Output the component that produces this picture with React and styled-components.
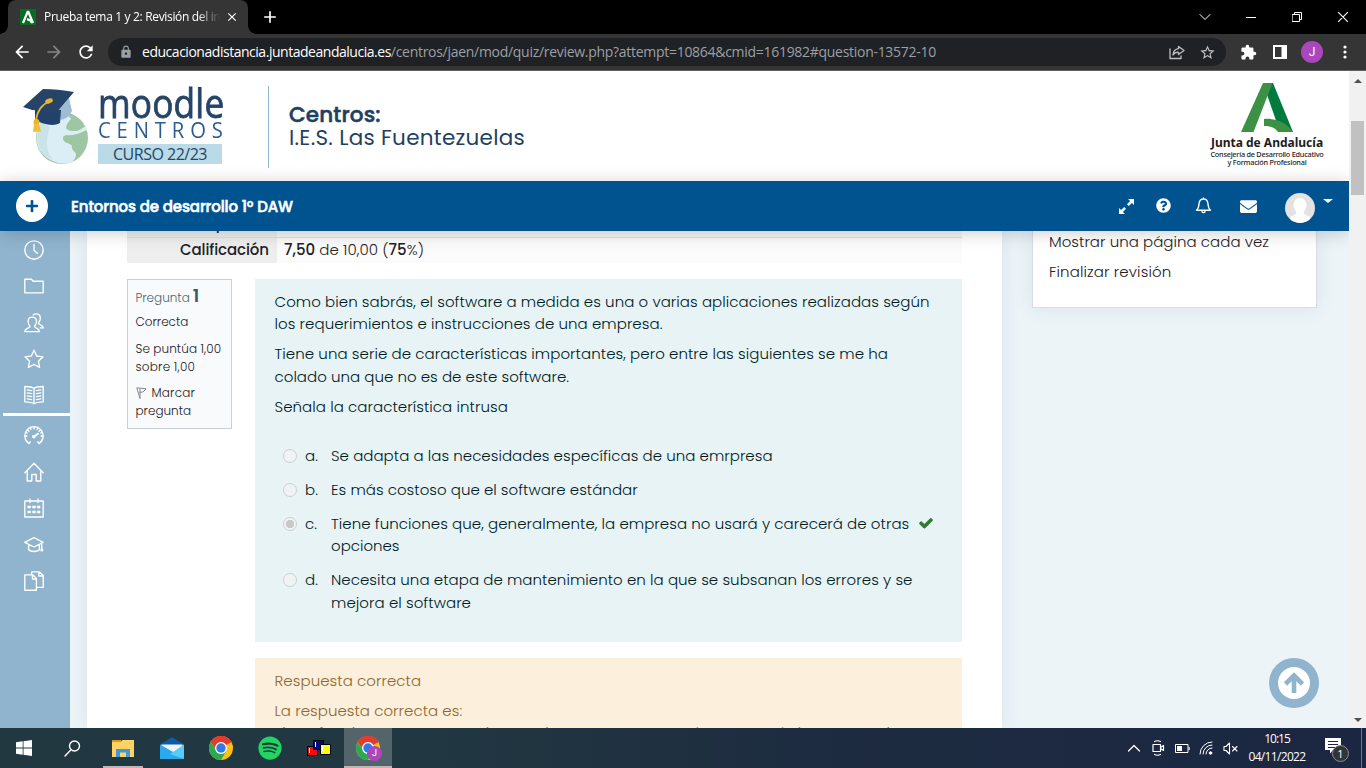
import React, { useLayoutEffect, useRef, useState } from "react";
import styled, { createGlobalStyle, css } from "styled-components";
import { MdArrowBack, MdArrowForward, MdRefresh, MdLock, MdExtension, MdStarBorder, MdClose, MdAdd } from "react-icons/md";
import { FaQuestionCircle, FaEnvelope, FaPlus, FaSpotify } from "react-icons/fa";

const Global = createGlobalStyle`
  * { box-sizing: border-box; }
  body { margin: 0; overflow: hidden; background: #fff; }
  svg { display: block; flex: none; }
  p { margin: 0; }
`;
const ui = '"Open Sans", "Noto Sans", sans-serif';
const geo = 'Poppins, Inter, "Open Sans", sans-serif';

const Screen = styled.div`
  width: 1366px; height: 768px; overflow: hidden;
  display: flex; flex-direction: column; font-family: ${geo};
`;

/* Text that spreads its letters over a given measure. */
const FitSpan = styled.span`
  display: inline-block; white-space: nowrap;
  font-weight: ${(p) => p.$weight || "inherit"};
`;
const Heavy = styled.span`-webkit-text-stroke: 0.55px currentColor; font-weight: 500;`;
function Fit({ w, weight, children }) {
  const ref = useRef(null);
  const [gap, setGap] = useState(0);
  useLayoutEffect(() => {
    const el = ref.current;
    el.style.letterSpacing = "0px";
    const next = (w - el.offsetWidth) / Math.max(1, el.textContent.length - 1);
    el.style.letterSpacing = next + "px";
    setGap(next);
  }, [w]);
  return <FitSpan ref={ref} $weight={weight} style={{ letterSpacing: gap + "px" }}>{children}</FitSpan>;
}

/* ---------- browser ---------- */
const TabStrip = styled.div`
  height: 34px; flex: none; background: #000; display: flex; align-items: center; padding-left: 8px; color: #fff;
`;
const Tab = styled.div`
  position: relative; width: 240px; height: 34px; background: #353535; border-radius: 8px 8px 0 0;
  display: flex; align-items: center; padding: 0 8px 0 12px; font: 12px ${ui};
  &::before, &::after {
    content: ""; position: absolute; bottom: 0; width: 8px; height: 8px;
  }
  &::before { left: -8px; background: radial-gradient(circle at 0 0, #000 7.5px, #353535 8px); }
  &::after { right: -8px; background: radial-gradient(circle at 100% 0, #000 7.5px, #353535 8px); }
`;
const TabTitle = styled.div`
  width: 176px; margin: 0 5px 0 8px; overflow: hidden; white-space: nowrap; line-height: 18px;
  mask-image: linear-gradient(90deg, #000 154px, transparent 176px);
`;
const NewTab = styled.div`margin-left: 12px;`;
const WindowButtons = styled.div`
  margin-left: auto; display: flex; height: 28px; align-items: center;
`;
const WinButton = styled.div`width: 46px; display: flex; justify-content: center;`;
const Toolbar = styled.div`
  height: 37px; flex: none; background: #353535; border-bottom: 1px solid #606060; color: #fff;
  display: flex; align-items: center; padding-left: 12px;
`;
const NavIcons = styled.div`display: flex; gap: 12px; width: 96px; svg:nth-child(2) { color: #858585; }`;
const UrlBar = styled.div`
  width: 1118px; height: 28px; border-radius: 14px; background: #202124; display: flex; align-items: center;
  padding: 0 10px 0 11px; font: 14px ${ui}; color: #fff; white-space: nowrap;
`;
const UrlText = styled.div`margin-left: 9px; line-height: 20px; span + span { color: #9aa0a6; }`;
const UrlActions = styled.div`margin-left: auto; display: flex; gap: 14px; align-items: center; color: #bdc1c6;`;
const Extensions = styled.div`margin-left: 14px; display: flex; align-items: center; gap: 16px;`;
const Profile = styled.div`
  width: 22px; height: 22px; border-radius: 50%; background: #ab47bc; margin: 0 -2px;
  font: 12px/22px Roboto, sans-serif; text-align: center;
`;

/* ---------- page ---------- */
const Viewport = styled.div`height: 657px; flex: none; display: flex;`;
const Page = styled.div`position: relative; width: 1349px; display: flex; flex-direction: column; overflow: hidden;`;
const SiteHeader = styled.div`height: 110px; flex: none; background: #fff; display: flex; align-items: flex-start;`;
const MoodleLogo = styled.div`
  margin-left: 22px; margin-top: 15px; width: 247px; height: 82px; border-right: 1px solid #90b4ce; display: flex;
  font-family: ${ui};
`;
const LogoWords = styled.div`margin-left: 9px; width: 126px; display: flex; flex-direction: column;`;
const WordMoodle = styled.div`
  height: 35px; width: 148px; font-size: 41px; line-height: 33px; color: #264467; -webkit-text-stroke: 0.8px #264467;
  transform: scaleX(0.86); transform-origin: 0 0;
`;
const WordCentros = styled.div`
  height: 23px; width: 140px; font-size: 22.5px; line-height: 18px; color: #2d5c93; transform: scaleX(0.9); transform-origin: 0 0;
`;
const WordYear = styled.div`
  width: 124px; height: 20px; background: #b9dae6; color: #264467; font-size: 16px; line-height: 20px; text-align: center;
`;
const Centre = styled.div`margin: 33px 0 0 20px; font-size: 21.5px; line-height: 22.5px; color: #1f3f63;`;
const JuntaLogo = styled.div`
  margin: 12px 25px 0 auto; width: 114px; display: flex; flex-direction: column; align-items: center;
  font-family: "Noto Sans", sans-serif; color: #1d1d1b;
`;
const JuntaName = styled.div`margin-top: 4px; font-size: 12px; line-height: 14px; font-weight: 700;`;
const JuntaDept = styled.div`font-size: 7.3px; line-height: 8px; font-weight: 500;`;

const Navbar = styled.div`
  position: relative; z-index: 2; height: 50px; flex: none; background: #00538f; color: #fff;
  display: flex; align-items: center; padding: 0 16px; box-shadow: 0 2px 18px rgba(0, 0, 0, 0.2);
  font-size: 15px;
`;
const PlusButton = styled.div`
  width: 32px; height: 32px; border-radius: 50%; background: #fff; color: #00538f; margin-right: 23px;
  display: flex; align-items: center; justify-content: center;
`;
const NavTools = styled.div`margin-left: auto; display: flex; align-items: center;`;
const NavTool = styled.div`width: ${(p) => p.$w}px; display: flex; justify-content: center; margin-top: ${(p) => p.$lift || 0}px;`;
const Avatar = styled.div`
  width: 30px; height: 30px; margin: 4px 8px 0 13px; border-radius: 50%; overflow: hidden; background: #e3e3e3;
`;
const Caret = styled.div`border: 5px solid transparent; border-top: 4px solid #fff; border-bottom: 0; margin-top: -10px;`;

const Body = styled.div`flex: 1; display: flex; background: #ecf4f8; min-height: 0;`;
const Sidebar = styled.div`
  width: 70px; background: #90b4ce; color: #fff; display: flex; flex-direction: column; align-items: flex-end; padding-top: 0.8px;
`;
const SideItem = styled.div`
  width: 70px; height: 36.3px; display: flex; align-items: center; justify-content: center; padding-right: 1.5px;
`;
const SideRule = styled.div`width: 67px; height: 3px; background: #fff; margin: 0 0 1.2px;`;
const Card = styled.div`background: #fff; box-shadow: 0 0 18px rgba(40, 70, 110, 0.1);`;
const MainCard = styled(Card)`width: 915px; margin-left: 17px; padding: 0 40px; overflow: hidden;`;
const BlockCard = styled(Card)`
  width: 285px; height: 77px; margin-left: 30px; border: 1px solid #d8dfe3; border-top: 0; padding: 0 16px;
  font-size: 15px; line-height: 30px; font-weight: 300; color: #1d2125;
  p:first-child { margin-top: -4px; }
`;
const Summary = styled.div`
  height: 32px; display: flex; flex-direction: column; justify-content: flex-end; overflow: hidden; font-size: 15px;
`;
const SummaryRow = styled.div`display: flex; flex: none; border-bottom: ${(p) => (p.$line ? "1px solid #dee2e6" : "0")};`;
const SummaryHead = styled.div`
  width: 150px; background: #eeeeee; padding: 1px 8px 1.5px; text-align: right; line-height: 22.5px; font-weight: 500; color: #1d2125;
`;
const SummaryCell = styled.div`flex: 1; background: ${(p) => (p.$alt ? "#f8f8f8" : "#fbfbfb")}; padding: 1px 7px 1.5px; line-height: 22.5px; font-weight: 300; color: #1d2125;`;
const Question = styled.div`display: flex; margin-top: 16px; gap: 23px; align-items: flex-start;`;
const Info = styled.div`
  width: 105px; height: 150px; flex: none; border: 1px solid #cad0d7; background: #f8fafc; padding: 7px 0 0 7.5px;
  font-size: 12px; line-height: 18px; font-weight: 300; color: #1d2125; white-space: nowrap;
`;
const InfoPart = styled.div`
  margin-bottom: ${(p) => p.$after}px; height: ${(p) => p.$h || 18}px; display: flex; align-items: ${(p) => p.$align || "center"};
  color: ${(p) => p.$color || "inherit"};
`;
const QNumber = styled.span`font-size: 18px; font-weight: 600; line-height: 18px; margin-left: 3px; color: #3f5a68;`;
const FlagSlot = styled.span`width: 16px;`;
const Content = styled.div`width: 707px;`;
const paper = css`font-size: 15px; line-height: 22.5px; font-weight: 300; white-space: nowrap;`;
const Formulation = styled.div`
  ${paper} height: 363px; background: #e7f3f5; color: #001a1e; padding: 11.5px 19.5px 0;
`;
const Para = styled.p`margin-bottom: 7.5px;`;
const Answers = styled.div`margin-top: 26.5px;`;
const Answer = styled.div`display: flex; padding: 0 0 11.6px 8px;`;
const Radio = styled.span`
  width: 14px; height: 14px; margin: 4px 8.5px 0 0; flex: none; border: 1px solid #cbd1d3; border-radius: 50%;
  background: ${(p) => (p.$on ? "radial-gradient(circle, #c6c9ca 3.8px, #f0f4f5 4.5px)" : "#eff3f4")};
`;
const Letter = styled.span`width: 26px; flex: none;`;
const Tick = styled.span`margin: 2px 0 0 9px; color: #357a32; height: 14px;`;
const Outcome = styled.div`
  ${paper} margin-top: 16px; height: 120px; padding: 11.5px 19.5px; background: #fcefdc; color: #8e662e;
`;
const TopButton = styled.div`
  position: absolute; right: 30px; bottom: 20px; width: 50px; height: 50px; border-radius: 50%;
  border: 9px solid #90b4ce; background: #fff; color: #90b4ce; display: flex; align-items: center; justify-content: center;
`;
const Scrollbar = styled.div`
  width: 17px; background: #f1f1f1; display: flex; flex-direction: column; align-items: center; padding: 8px 0 6px;
`;
const ScrollArrow = styled.div`
  border: 4px solid transparent; ${(p) => (p.$up ? "border-bottom: 4px solid #505050; border-top: 0;" : "border-top: 4px solid #505050; border-bottom: 0; margin-top: auto;")}
`;
const Thumb = styled.div`width: 13px; height: 74px; margin-top: 38px; background: #c1c1c1;`;

/* ---------- taskbar ---------- */
const Taskbar = styled.div`
  height: 40px; flex: none; display: flex; background: linear-gradient(90deg, #213841 0%, #213741 32%, #1d2b40 62%, #1b2742 100%);
  color: #fff; font-family: ${ui};
`;
const Task = styled.div`
  width: 49px; height: 40px; display: flex; align-items: center; justify-content: center; position: relative;
  padding-right: ${(p) => p.$nudge || 0}px;
  background: ${(p) => (p.$active ? "linear-gradient(90deg, transparent 1px, #53646b 1px)" : "none")};
  ${(p) => p.$open && css`&::after { content: ""; position: absolute; bottom: 0; left: ${p.$active ? 1 : 5}px; right: ${p.$active ? 0 : 4}px; height: 2px; background: #c0b4b4; }`}
`;
const TaskBadge = styled.span`
  position: absolute; left: 24px; top: 18px; width: 15px; height: 15px; border-radius: 50%; background: #ab47bc;
  font: 9px/15px Roboto, sans-serif; text-align: center;
`;
const Tray = styled.div`margin-left: auto; display: flex; align-items: center;`;
const TrayIcon = styled.div`width: 23.9px; display: flex; justify-content: center;`;
const Clock = styled.div`width: 60px; margin: 0 18px 0 5px; text-align: center; font-size: 12px; line-height: 18px;`;
const Notice = styled.div`position: relative; width: 18px; height: 18px; margin: 0 18px 2px 0;`;
const NoticeCount = styled.span`
  position: absolute; left: 7px; top: 7px; width: 17px; height: 17px; border: 1px solid #8c8f94; border-radius: 50%;
  background: #303439; font-size: 11px; line-height: 15px; text-align: center;
`;
const ShowDesktop = styled.div`width: 5px; height: 40px; border-left: 1px solid #6c7588;`;

const S = ({ size = 20, sw = 1.35, children, box = 20 }) => (
  <svg width={size} height={size} viewBox={`0 0 ${box} ${box}`} fill="none" stroke="currentColor" strokeWidth={sw} strokeLinejoin="round" strokeLinecap="round">{children}</svg>
);

const sideIcons = [
  <S key="a"><circle cx="10" cy="10" r="9.2" /><path d="M10 4.2V10.2l3.4 3" /></S>,
  <S key="b"><path d="M.8 3.2h6.6l1.7 2h10.1v11.6H.8z" /></S>,
  <S key="c"><path d="M8.3 4.1c2.7 0 4.2 1.8 4.2 4.3 0 2-.8 3.3-1.8 4.4-.5 1.3.4 1.8 1.8 2.4 2 .8 2.8 1.7 3 3.4H.8c.2-1.8 1-2.7 3.2-3.5 1.4-.5 2.3-1 1.8-2.3-1-1.1-1.700-2.400-1.700-4.400 0-2.500 1.500-4.300 4.200-4.300z" /><path d="M9.200 2c.9-.8 1.900-1.100 3-1.100 2.600 0 4.100 1.800 4.100 4.300 0 1.900-.7 3.200-1.700 4.300-.5 1.300.5 1.800 1.800 2.300 1.900.7 2.700 1.500 2.900 3.100h-3.100" /></S>,
  <S key="d"><path d="M10 1.200l2.700 5.800 6.300.8-4.600 4.400 1.200 6.300-5.600-3.100-5.600 3.100 1.200-6.300L1 7.800 7.300 7z" /></S>,
  <S key="e"><path d="M10 3.400C8 1.800 4.500 1.600.8 1.500v15.300c3.700.1 7.200.5 9.200 2 2-1.500 5.500-1.900 9.200-2V1.500c-3.700.1-7.200.3-9.200 1.900zM10 3.400v15M3.300 4.800l4.300.8M3.300 7.800l4.300.8M3.300 10.800l4.300.8M3.300 13.800l4.300.8M16.700 4.800l-4.300.8M16.700 7.800l-4.300.8M16.700 10.800l-4.300.8M16.700 13.800l-4.300.8" /></S>,
  <S key="f"><path d="M5 17.600A9.200 9.200 0 1 1 15 17.600l-1.200-1.800M5 17.600l1.200-1.800M10 1v2M1 10h2M19 10h-2M3.600 3.800L5 5.200M16.400 3.800L15 5.200M6.300 1.800l.7 1.600M13.700 1.800l-.7 1.600M1.700 6.400l1.600.7M18.300 6.400l-1.600.7" /><path d="M10 10.600l4-2.800" strokeWidth="2" /><circle cx="9.800" cy="10.700" r="1.100" fill="currentColor" /></S>,
  <S key="g"><path d="M.9 10.800L10 1.300l9.100 9.500M3.200 9v10h4.600v-6.500h4.400V19h4.600V9" /></S>,
  <S key="h"><path d="M.8 3h18.400v16H.8zM6 1v3.500M14 1v3.500" /><path d="M4 8h2.500v2H4zM8.800 8h2.500v2H8.800zM13.500 8H16v2h-2.500zM4 13h2.500v2H4zM8.800 13h2.500v2H8.800zM13.500 13H16v2h-2.500z" fill="currentColor" strokeWidth=".6" /></S>,
  <S key="i"><path d="M10 2.700L.8 7.400 10 12l9.200-4.600zM4.600 9.600v5.100c1.500 2.400 9.300 2.400 10.800 0V9.600M17.800 8.200v6" /><circle cx="17.800" cy="15" r=".9" /></S>,
  <S key="j"><path d="M.8 3.800h8l3.600 3.800v11.600H.8zM8.400 4v4h4M7.600 3.600V.9h7.800l3.800 3.700v11.800h-6.600M14.800 1v4h4" /></S>,
];

const MoodleMark = () => (
  <svg width="67" height="80" viewBox="22 86 67 80">
    <circle cx="62" cy="138" r="26" fill="#9fc6a3" />
    <path d="M43 120c-7 8-8 20-4 29 4 7 12 12 19 14 5 1 9 1 13 0 3-3 5-5 5-9-1-3-5-4-4-8-2-3-5-2-8-5-2-3-1-5 2-6 6 1 10-1 14-2l7-3-1-4c-4 2-7 5-10 5-5 0-8 0-10-3 0-3 2-6 5-9-1-4-8-4-13 0z" fill="#dceef5" />
    <path d="M41 122c-6 12-4 25 2 32l11 7c-8-8-9-21-4-34z" fill="#c9e3e7" />
    <path d="M57 112l12-14 3 13c-3 6-7 8-11 9z" fill="#9ebbd5" />
    <path d="M35 107l26 3-1 13c-7 4-17 1-25-3z" fill="#21426b" />
    <path d="M23 107l20-18c10 0 20 1 31 3l-17 20c-11 1-23-1-34-5z" fill="#264467" />
    <path d="M50 101c-7 3-13 8-14 20" fill="none" stroke="#e9b72e" strokeWidth="1.800" />
    <ellipse cx="49" cy="101" rx="4" ry="2.300" fill="#e9b72e" transform="rotate(-20 49 101)" />
    <circle cx="36.500" cy="122" r="3" fill="#e9b72e" /><path d="M34 124h5l2 7.500-8 .5z" fill="#f2c037" />
  </svg>
);
const JuntaMark = () => (
  <svg width="53" height="49" viewBox="0 0 53 49">
    <path d="M22 0h10l20 49H39z" fill="#007a3d" />
    <path d="M22 0h9.500L12.500 49H0z" fill="#3c9144" />
    <path d="M23 36c11-1 23 3 29 13H37c-4-5-8-6-14-6z" fill="#3c9144" />
  </svg>
);
const Chrome = () => (
  <svg width="24" height="24" viewBox="0 0 24 24">
    <circle cx="12" cy="12" r="12" fill="#fbc116" />
    <path d="M12 12L1.600 6A12 12 0 0 1 22.400 6z" fill="#e33b2e" /><path d="M12 6.500h10.700A12 12 0 0 0 1.600 6L7.500 14z" fill="#e33b2e" />
    <path d="M1.600 6A12 12 0 0 0 12 24l5-8.500-5-1-4.800-.5z" fill="#2da94f" />
    <circle cx="12" cy="12" r="6" fill="#fff" /><circle cx="12" cy="12" r="4.700" fill="#2f79e8" />
  </svg>
);

export default function App() {
  return (
    <Screen>
      <Global />
      <TabStrip>
        <Tab>
          <svg width="16" height="16" viewBox="0 0 16 16"><path d="M0 0h16v16H0z" fill="#0a6b24" /><path d="M8 2L3 14M8 2l5 12M7 10.300q3.500 0 5 3.700" fill="none" stroke="#fff" strokeWidth="2.200" /></svg>
          <TabTitle><Fit w={177}>Prueba tema 1 y 2: Revisión del in</Fit></TabTitle>
          <MdClose size={14} />
        </Tab>
        <NewTab><MdAdd size={20} /></NewTab>
        <WindowButtons>
          <WinButton><S size={12} box={12} sw={1}><path d="M1 3.500l5 5 5-5" /></S></WinButton>
          <WinButton><S size={10} box={10} sw={1}><path d="M0 5.500h10" /></S></WinButton>
          <WinButton><S size={10} box={10} sw={1}><path d="M.5 2.500h7v7h-7zM2.500 2.500v-2h7v7h-2" /></S></WinButton>
          <WinButton><S size={10} box={10} sw={1.1}><path d="M0 0l10 10M10 0L0 10" /></S></WinButton>
        </WindowButtons>
      </TabStrip>
      <Toolbar>
        <NavIcons><MdArrowBack size={20} /><MdArrowForward size={20} /><MdRefresh size={20} /></NavIcons>
        <UrlBar>
          <MdLock size={14} color="#9aa0a6" />
          <UrlText>
            <Fit w={249}>educacionadistancia.juntadeandalucia.es</Fit>
            <Fit w={545}>/centros/jaen/mod/quiz/review.php?attempt=10864&amp;cmid=161982#question-13572-10</Fit>
          </UrlText>
          <UrlActions>
            <S size={16} box={16} sw={1.3}><path d="M1 5v9.500h11V12M9.500 2.500L15 6.500l-5.500 4V8.300C7 8 5.300 9 4 11c.3-3.500 2.500-6 5.500-6.300z" /></S>
            <MdStarBorder size={17} />
          </UrlActions>
        </UrlBar>
        <Extensions>
          <MdExtension size={17} />
          <svg width="14" height="14" viewBox="0 0 14 14"><path d="M0 0h14v14H0zM2 2v10h6.500V2z" fill="#fff" fillRule="evenodd" /></svg>
          <Profile>J</Profile>
          <svg width="16" height="16" viewBox="0 0 16 16" fill="#fff"><circle cx="8" cy="3" r="1.600" /><circle cx="8" cy="8" r="1.600" /><circle cx="8" cy="13" r="1.600" /></svg>
        </Extensions>
      </Toolbar>

      <Viewport>
        <Page>
          <SiteHeader>
            <MoodleLogo>
              <MoodleMark />
              <LogoWords>
                <WordMoodle><Fit w={147}>moodle</Fit></WordMoodle>
                <WordCentros><Fit w={139}>CENTROS</Fit></WordCentros>
                <WordYear><Fit w={94}>CURSO 22/23</Fit></WordYear>
              </LogoWords>
            </MoodleLogo>
            <Centre>
              <div><Fit w={92}><Heavy>Centros:</Heavy></Fit></div>
              <div><Fit w={236}>I.E.S. Las Fuentezuelas</Fit></div>
            </Centre>
            <JuntaLogo>
              <JuntaMark />
              <JuntaName><Fit w={112}>Junta de Andalucía</Fit></JuntaName>
              <JuntaDept><Fit w={113}>Consejería de Desarrollo Educativo</Fit></JuntaDept>
              <JuntaDept><Fit w={79}>y Formación Profesional</Fit></JuntaDept>
            </JuntaLogo>
          </SiteHeader>
          <Navbar>
            <PlusButton><FaPlus size={14} /></PlusButton>
            <Fit w={222}><Heavy>Entornos de desarrollo 1º DAW</Heavy></Fit>
            <NavTools>
              <NavTool $w={36}><svg width="15" height="15" viewBox="0 0 15 15" fill="#fff"><path d="M9 0h6v6l-2.100-2.100L9.800 7 8 5.200l3.100-3.100zM6 15H0V9l2.100 2.100L5.200 8 7 9.800l-3.100 3.100z" /></svg></NavTool>
              <NavTool $w={39} $lift={-2}><FaQuestionCircle size={15} /></NavTool>
              <NavTool $w={41} $lift={-1}><S size={17} box={17} sw={1.4}><path d="M8.500 1v1M1.500 13.200c2-1.500 2.300-3.700 2.500-6.200.2-3 1.800-5 4.500-5s4.300 2 4.500 5c.2 2.500.5 4.700 2.500 6.200zM7 14.500c.3 1.500 2.700 1.500 3 0" /></S></NavTool>
              <NavTool $w={48}><FaEnvelope size={17} /></NavTool>
              <Avatar><svg width="30" height="30" viewBox="0 0 30 30" fill="#fff"><ellipse cx="15" cy="12.500" rx="6.500" ry="7.500" /><path d="M11 17h8v4l6 3v6H5v-6l6-3z" /></svg></Avatar>
              <Caret />
            </NavTools>
          </Navbar>
          <Body>
            <Sidebar>
              {sideIcons.slice(0, 5).map((icon, i) => <SideItem key={i}>{icon}</SideItem>)}
              <SideRule />
              {sideIcons.slice(5).map((icon, i) => <SideItem key={i}>{icon}</SideItem>)}
            </Sidebar>
            <MainCard>
              <Summary>
                <SummaryRow $line><SummaryHead>Tiempo<br />empleado</SummaryHead><SummaryCell $alt /></SummaryRow>
                <SummaryRow>
                  <SummaryHead><Fit w={89}>Calificación</Fit></SummaryHead>
                  <SummaryCell><Fit w={140}><FitSpan $weight={500}>7,50</FitSpan> de 10,00 (<FitSpan $weight={500}>75</FitSpan>%)</Fit></SummaryCell>
                </SummaryRow>
              </Summary>
              <Question>
                <Info>
                  <InfoPart $h={20} $after={6} $align="baseline" $color="#4c6672"><Fit w={54}>Pregunta</Fit><QNumber>1</QNumber></InfoPart>
                  <InfoPart $after={9}><Fit w={53}>Correcta</Fit></InfoPart>
                  <InfoPart $after={0}><Fit w={86}>Se puntúa 1,00</Fit></InfoPart>
                  <InfoPart $after={8}><Fit w={59}>sobre 1,00</Fit></InfoPart>
                  <InfoPart $after={0}>
                    <FlagSlot><svg width="11" height="12" viewBox="0 0 11 12" fill="none" stroke="#777c81" strokeWidth=".9"><path d="M.8.800l3.200 10.700M4 11.500V1.500M.8.800L10 1.800 7 5 3.500 5.300" /></svg></FlagSlot>
                    <Fit w={43}>Marcar</Fit>
                  </InfoPart>
                  <InfoPart $after={0}><Fit w={56}>pregunta</Fit></InfoPart>
                </Info>
                <Content>
                  <Formulation>
                    <Para><Fit w={655}>Como bien sabrás, el software a medida es una o varias aplicaciones realizadas según</Fit><br /><Fit w={388}>los requerimientos e instrucciones de una empresa.</Fit></Para>
                    <Para><Fit w={613}>Tiene una serie de características importantes, pero entre las siguientes se me ha</Fit><br /><Fit w={295}>colado una que no es de este software.</Fit></Para>
                    <p><Fit w={233}>Señala la característica intrusa</Fit></p>
                    <Answers>
                      <Answer><Radio /><Letter>a.</Letter><Fit w={442}>Se adapta a las necesidades específicas de una emrpresa</Fit></Answer>
                      <Answer><Radio /><Letter>b.</Letter><Fit w={307}>Es más costoso que el software estándar</Fit></Answer>
                      <Answer><Radio $on /><Letter>c.</Letter>
                        <div><Fit w={578}>Tiene funciones que, generalmente, la empresa no usará y carecerá de otras</Fit><br /><Fit w={69}>opciones</Fit></div>
                        <Tick><svg width="16" height="16" viewBox="0 0 1792 1792" fill="currentColor"><path d="M1671 566q0 40-28 68l-724 724-136 136q-28 28-68 28t-68-28l-136-136-362-362q-28-28-28-68t28-68l136-136q28-28 68-28t68 28l294 295 656-657q28-28 68-28t68 28l136 136q28 28 28 68z" /></svg></Tick>
                      </Answer>
                      <Answer><Radio /><Letter>d.</Letter>
                        <div><Fit w={581}>Necesita una etapa de mantenimiento en la que se subsanan los errores y se</Fit><br /><Fit w={140}>mejora el software</Fit></div>
                      </Answer>
                    </Answers>
                  </Formulation>
                  <Outcome>
                    <Para><Fit w={147}>Respuesta correcta</Fit></Para>
                    <p><Fit w={188}>La respuesta correcta es:</Fit><br /><Fit w={652}>Tiene funciones que, generalmente, la empresa no usará y carecerá de otras opciones</Fit></p>
                  </Outcome>
                </Content>
              </Question>
            </MainCard>
            <BlockCard>
              <p><Fit w={220}>Mostrar una página cada vez</Fit></p>
              <p><Fit w={122}>Finalizar revisión</Fit></p>
            </BlockCard>
          </Body>
          <TopButton><svg width="22" height="22" viewBox="0 0 22 22" fill="none" stroke="currentColor" strokeWidth="4.600"><path d="M11 21V4M2.500 12L11 3.500l8.500 8.500" /></svg></TopButton>
        </Page>
        <Scrollbar><ScrollArrow $up /><Thumb /><ScrollArrow /></Scrollbar>
      </Viewport>

      <Taskbar>
        <Task $nudge={2}><svg width="16" height="16" viewBox="0 0 16 16" fill="#fff"><path d="M0 2.300L6.700 1.300v6.300H0zM7.500 1.200L16 0v7.600H7.500zM0 8.400h6.700v6.300L0 13.700zM7.500 8.400H16V16l-8.500-1.200z" /></svg></Task>
        <Task $nudge={3}><S size={17} box={17} sw={1.4}><circle cx="10.500" cy="6" r="5" /><path d="M7 9.700L1 16" /></S></Task>
        <Task $open>
          <svg width="22" height="19" viewBox="0 0 22 19"><path d="M0 1h9l1 2H0z" fill="#d79b13" /><path d="M0 3h9l1.500-2H22v17H0z" fill="#ffd262" /><path d="M4 18v-8h14v8h-4v-4.500H8V18z" fill="#3f98d8" /></svg>
        </Task>
        <Task><svg width="24" height="22" viewBox="0 0 24 22"><path d="M0 7.500L12 0l12 7.500V13H0z" fill="#0c5ca8" /><path d="M1.500 7.500h21V14l-10.500 3-10.500-3z" fill="#f2f3f4" /><path d="M0 7.500L14 15.500 24 22H0z" fill="#2aa9ef" /><path d="M24 7.500L10 17l14 5z" fill="#55cdf6" /></svg></Task>
        <Task><Chrome /></Task>
        <Task><FaSpotify size={24} color="#1fd760" /></Task>
        <Task><svg width="24" height="18" viewBox="0 0 24 18" stroke="#000"><path d="M.5 7.500h10v9H.500z" fill="#f01010" /><path d="M6.500 1.500h10v9h-10z" fill="#000c80" /><path d="M13.500 5.500h10v10h-10z" fill="#ff0" /><path d="M2.500 9v5M8.500 3v5M15.500 7v5" stroke="#fff" /></svg></Task>
        <Task $active $open><Chrome /><TaskBadge>J</TaskBadge></Task>
        <Tray>
          <TrayIcon><S size={12} box={12} sw={1.3}><path d="M.5 9L6 3.500 11.500 9" /></S></TrayIcon>
          <TrayIcon><S size={16} box={16} sw={1.2}><path d="M3 4.500h7.500v7H3zM10.500 7.500l3-2v5l-3-2M4.500 1.500q3-1.500 6 0M4.500 14.500q3 1.500 6 0" /></S></TrayIcon>
          <TrayIcon><svg width="15" height="9" viewBox="0 0 15 9"><path d="M.5.5h12.500v8H.5zM14.200 3v3" fill="none" stroke="#fff" /><path d="M2 2h5v5H2z" fill="#fff" /></svg></TrayIcon>
          <TrayIcon><S size={14} box={14} sw={1}><path d="M1 13A12 12 0 0 1 13 1M4 13a9 9 0 0 1 9-9M7 13a6 6 0 0 1 6-6" /><circle cx="11.500" cy="12" r="1.300" fill="#fff" /></S></TrayIcon>
          <TrayIcon><S size={15} box={15} sw={1.1}><path d="M1 5.500h2l3.500-3.500v11L3 9.500H1zM9.500 5.500l4.500 4.500M14 5.500L9.500 10" /></S></TrayIcon>
          <Clock><Fit w={27}>10:15</Fit><br /><Fit w={58}>04/11/2022</Fit></Clock>
          <Notice>
            <svg width="16" height="16" viewBox="0 0 16 16"><path d="M0 0h16v12H8l-3 3.500V12H0z" fill="#fff" /><path d="M3 3.500h10M3 6.500h10M3 9.500h7" stroke="#1b2742" /></svg>
            <NoticeCount>1</NoticeCount>
          </Notice>
          <ShowDesktop />
        </Tray>
      </Taskbar>
    </Screen>
  );
}
